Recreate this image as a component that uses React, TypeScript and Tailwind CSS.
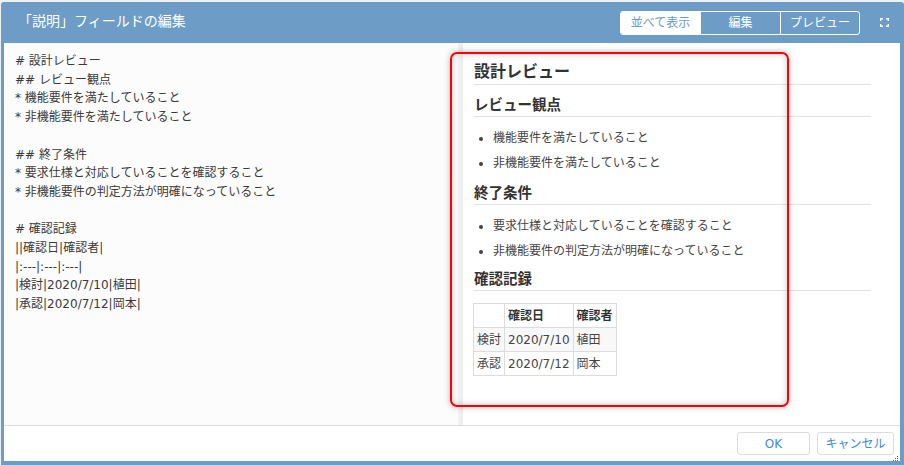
import React from "react";

const FONT = "font-['DejaVu_Sans','Noto_Sans_CJK_JP',sans-serif]";

const sourceText = `# 設計レビュー
## レビュー観点
* 機能要件を満たしていること
* 非機能要件を満たしていること

## 終了条件
* 要求仕様と対応していることを確認すること
* 非機能要件の判定方法が明確になっていること

# 確認記録
||確認日|確認者|
|:---|:---|:---|
|検討|2020/7/10|植田|
|承認|2020/7/12|岡本|`;

const rows = [
  ["検討", "2020/7/10", "植田"],
  ["承認", "2020/7/12", "岡本"],
];

const FullscreenIcon = () => (
  <svg width="9" height="9" viewBox="0 0 9 9" fill="none" stroke="white" strokeWidth="1.4">
    <path d="M0.7 3V0.7H3M6 0.7H8.3V3M8.3 6V8.3H6M3 8.3H0.7V6" />
  </svg>
);

const Preview = () => (
  <div className="pl-[11px] pr-[29px] pt-[17px] text-[12px] text-[#444]">
    <h1 className="text-[16px] font-bold leading-[24px] text-[#333] border-b border-[#e2e2e2]">
      設計レビュー
    </h1>
    <h2 className="mt-[9px] text-[14.5px] font-bold leading-[22px] text-[#333] border-b border-[#e2e2e2]">
      レビュー観点
    </h2>
    <ul className="mt-[9px] list-disc pl-[19px] leading-[24.5px]">
      <li>機能要件を満たしていること</li>
      <li>非機能要件を満たしていること</li>
    </ul>
    <h2 className="mt-[7px] text-[14.5px] font-bold leading-[22px] text-[#333] border-b border-[#e2e2e2]">
      終了条件
    </h2>
    <ul className="mt-[9px] list-disc pl-[19px] leading-[24.5px]">
      <li>要求仕様と対応していることを確認すること</li>
      <li>非機能要件の判定方法が明確になっていること</li>
    </ul>
    <h2 className="mt-[5px] text-[14.5px] font-bold leading-[22px] text-[#333] border-b border-[#e2e2e2]">
      確認記録
    </h2>
    <table className="mt-[12px] -ml-[1px] border-collapse text-[12px] text-[#444]">
      <thead>
        <tr className="h-[24px]">
          <th className="w-[30px] border border-[#dcdcdc] px-[3px]"></th>
          <th className="border border-[#dcdcdc] px-[3px] text-left font-bold text-[#333] whitespace-nowrap">確認日</th>
          <th className="border border-[#dcdcdc] px-[3px] text-left font-bold text-[#333] whitespace-nowrap">確認者</th>
        </tr>
      </thead>
      <tbody>
        {rows.map((r, i) => (
          <tr key={i} className={`h-[24px] ${i === 0 ? "bg-[#f8f8f8]" : "bg-white"}`}>
            {r.map((c, j) => (
              <td key={j} className="border border-[#dcdcdc] px-[3px] whitespace-nowrap">
                {c}
              </td>
            ))}
          </tr>
        ))}
      </tbody>
    </table>
  </div>
);

export default function App() {
  return (
    <div className={`w-[904px] h-[465px] overflow-hidden bg-[#eef0f2] pt-[2px] pl-[1px] ${FONT}`}>
      <div className="w-[903px] h-[463px] bg-[#6d9dc6] rounded-t-[3px] flex flex-col pl-[3px] pr-[4px] pb-[4px]">
        {/* title bar */}
        <div className="h-[41px] shrink-0 flex items-center justify-between pl-[14px] pr-[11px]">
          <span className="text-[14px] text-white -mt-[2px]">「説明」フィールドの編集</span>
          <div className="flex items-center gap-[20px]">
            <div className="flex h-[24px] border border-white rounded-[3px] overflow-hidden text-[12px]">
              <button className="w-[79px] bg-white text-[#6d9dc6]">並べて表示</button>
              <button className="w-[80px] border-l border-white text-white">編集</button>
              <button className="w-[79px] border-l border-white text-white">プレビュー</button>
            </div>
            <FullscreenIcon />
          </div>
        </div>

        {/* body */}
        <div className="flex-1 bg-white flex flex-col relative">
          <div className="flex flex-1">
            <div className="w-[454px] bg-[#fcfcfc] pl-[11px] pt-[9px] text-[12px] leading-[18.7px] text-[#3a3a3a] whitespace-pre">
              {sourceText}
            </div>
            <div className="w-[5px] bg-gradient-to-r from-[#f3f3f3] to-[#ececec]" />
            <div className="flex-1 bg-white">
              <Preview />
            </div>
          </div>

          {/* footer */}
          <div className="h-[36px] shrink-0 border-t border-[#dedede] flex items-center justify-end gap-[7px] pr-[6px] relative">
            <button className="w-[73px] h-[23px] border border-[#dcdcdc] rounded-[3px] bg-white text-[12px] text-[#3d8bd4]">
              OK
            </button>
            <button className="w-[77px] h-[23px] border border-[#dcdcdc] rounded-[3px] bg-white text-[12px] text-[#3d8bd4]">
              キャンセル
            </button>
            <svg className="absolute right-[1px] bottom-[0px]" width="6" height="5" viewBox="0 0 6 5" fill="#666">
              <rect x="4" y="0" width="1" height="1" />
              <rect x="2" y="2" width="1" height="1" />
              <rect x="4" y="2" width="1" height="1" />
              <rect x="0" y="4" width="1" height="1" />
              <rect x="2" y="4" width="1" height="1" />
              <rect x="4" y="4" width="1" height="1" />
            </svg>
          </div>

          {/* red annotation box */}
          <div className="absolute left-[446px] top-[9px] w-[339px] h-[355px] border-2 border-[#ff0000] rounded-[7px] shadow-[0_0_6px_rgba(0,0,0,0.28),inset_0_0_6px_rgba(0,0,0,0.22)] pointer-events-none" />
        </div>
      </div>
    </div>
  );
}
